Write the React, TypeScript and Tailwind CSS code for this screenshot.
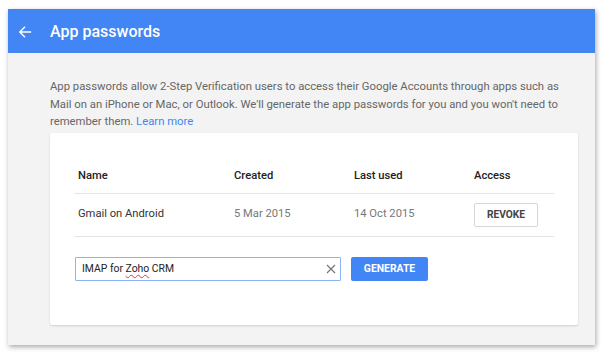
import React from "react";

export default function App() {
  return (
    <div className="w-[603px] h-[355px] bg-white pt-[9px] pl-[8px]" style={{ fontFamily: "Roboto, 'Liberation Sans', sans-serif" }}>
      <div className="w-[587px] h-[336px] bg-[#f3f3f3] shadow-[1px_2px_5px_rgba(0,0,0,0.35)] flex flex-col">
        <div className="h-[44px] bg-[#4285f4] flex items-center shrink-0 pt-[2px]">
          <svg width="14" height="14" viewBox="0 0 16 16" className="ml-[10px]">
            <path d="M15 8H2M8 2L2 8l6 6" stroke="#fff" strokeWidth="1.6" fill="none" />
          </svg>
          <div className="ml-[18px] text-white text-[16px] font-medium">App passwords</div>
        </div>
        <div className="pl-[42px] pt-[25px]">
          <p className="w-[516px] text-[11.3px] leading-[17.5px] text-[#666]">
            App passwords allow 2-Step Verification users to access their Google Accounts through apps such as Mail on an iPhone or Mac, or Outlook. We'll generate the app passwords for you and you won't need to remember them. <span className="text-[#4285f4]">Learn more</span>
          </p>
          <div className="mt-[2px] w-[528px] h-[192px] bg-white rounded-[2px] shadow-[0_1px_2px_rgba(0,0,0,0.15)] pt-[33px] px-[24px]">
            <div className="flex h-[28px] items-center border-b border-[#e5e5e5] text-[11.2px] font-medium text-[#222] pl-[4px] pb-[6px]">
              <div className="w-[156px]">Name</div>
              <div className="w-[120px]">Created</div>
              <div className="w-[120px]">Last used</div>
              <div>Access</div>
            </div>
            <div className="flex h-[43px] items-center border-b border-[#e5e5e5] text-[11.2px] pl-[4px]">
              <div className="w-[156px] text-[#333]">Gmail on Android</div>
              <div className="w-[120px] text-[#777]">5 Mar 2015</div>
              <div className="w-[120px] text-[#777]">14 Oct 2015</div>
              <div className="w-[64px] h-[24px] border border-[#d6d6d6] rounded-[2px] flex items-center justify-center text-[10.2px] font-bold text-[#444]">REVOKE</div>
            </div>
            <div className="flex items-center mt-[20px] pl-[1px]">
              <div className="w-[266px] h-[24px] border border-[#8ab4f8] rounded-[1px] flex items-center pl-[6px] pr-[4px] text-[10.4px] text-[#222]">
                <span className="flex-1">IMAP for <span className="underline decoration-wavy decoration-[#e53935] decoration-[1px] underline-offset-2">Zoho</span> CRM</span>
                <svg width="10" height="10" viewBox="0 0 10 10">
                  <path d="M1 1l8 8M9 1l-8 8" stroke="#777" strokeWidth="1.2" />
                </svg>
              </div>
              <div className="ml-[10px] w-[77px] h-[24px] bg-[#4285f4] rounded-[2px] flex items-center justify-center text-white text-[10.4px] font-bold">GENERATE</div>
            </div>
          </div>
        </div>
      </div>
    </div>
  );
}
